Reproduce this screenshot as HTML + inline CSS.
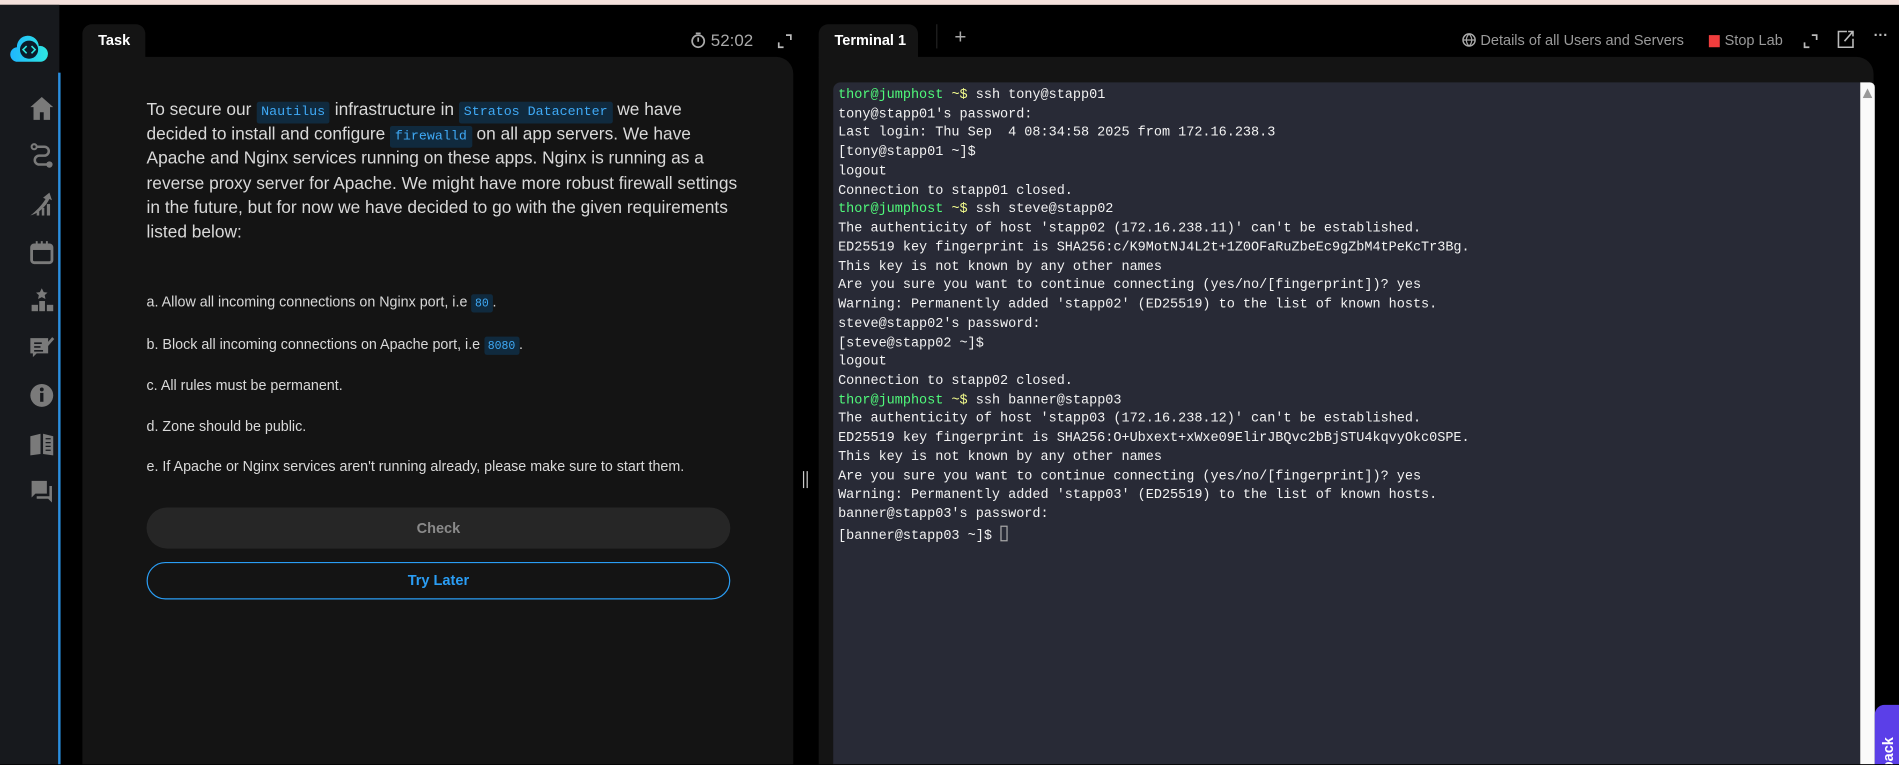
<!DOCTYPE html>
<html><head><meta charset="utf-8"><style>
*{box-sizing:border-box;margin:0;padding:0}
html,body{width:1899px;height:765px;overflow:hidden;background:#000}
#w{position:absolute;left:0;top:0;width:1568px;height:631px;transform:scale(1.2111);transform-origin:0 0;background:#000;font-family:"Liberation Sans",sans-serif;overflow:hidden}
.abs{position:absolute}
.top{left:0;top:0;width:1568px;height:4px;background:#f4e1dc}
.side{left:0;top:4px;width:49px;height:628px;background:#17191d}
.bl{left:48px;top:60px;width:2px;height:572px;background:#2a8fe0}
.ico{position:absolute;left:24px;width:21px;height:21px}
.tab{background:#141414;border-radius:8px 8px 0 0;color:#fff;font-weight:bold;font-size:12px;padding:6px 13px 0;white-space:nowrap}
.panel{background:#141414;border-radius:0 14px 0 0}
.p{color:#d9d9d9;font-size:14.3px;line-height:20.2px;white-space:nowrap}
code{font-family:"Liberation Mono",monospace;font-size:11px;color:#3fa9f5;background:#102a3e;padding:3px 4px;border-radius:2px;line-height:1}
.li{color:#d9d9d9;font-size:11.8px}
.li code{font-size:9.5px;padding:2px 3px}
.term{left:688px;top:68px;width:848px;height:563px;background:#282a36;border-radius:6px 0 0 0;font-family:"Liberation Mono",monospace;font-size:11.15px;line-height:15.74px;color:#f2f2f2;padding:4px 4px;white-space:pre;overflow:hidden}
.g{color:#50fa7b}.y{color:#f1fa8c}
.hd{color:#9a9a9a;font-size:12px;white-space:nowrap}
</style></head><body><div id="w">
<div class="abs top"></div>
<div class="abs side"></div>
<div class="abs bl"></div>
<svg class="abs" style="left:8px;top:29px" width="32" height="24" viewBox="0 0 32 24"><defs><linearGradient id="lg" x1="0" x2="1"><stop offset="0" stop-color="#1fb6ff"/><stop offset="1" stop-color="#2ee6e0"/></linearGradient></defs><path d="M7 22a6 6 0 0 1-1-12a9 9 0 0 1 18-1a6.5 6.5 0 0 1 2 13z" fill="url(#lg)"/><circle cx="16" cy="12" r="7.5" fill="#0b1a2a"/><path d="M14 9l-3 3 3 3M18 9l3 3-3 3" stroke="#2ee6e0" stroke-width="1.3" fill="none"/></svg>
<svg class="ico" style="top:79px" viewBox="0 0 20 20"><path d="M10 1L1 9h2.5v10h5v-6h3v6h5V9H19z" fill="#7a7a7a"/></svg>
<svg class="ico" style="top:118px" viewBox="0 0 20 20"><circle cx="4" cy="3" r="2" fill="none" stroke="#7a7a7a" stroke-width="1.6"/><circle cx="16" cy="17" r="2.5" fill="#7a7a7a"/><path d="M6 3h6a3.5 3.5 0 0 1 0 7H8a3.5 3.5 0 0 0 0 7h6" fill="none" stroke="#7a7a7a" stroke-width="2"/></svg>
<svg class="ico" style="top:158px" viewBox="0 0 20 20"><path d="M1 19c4-3 9-8 12-13l-2-1 5-4 2 6-2-1c-3 6-8 11-15 13z" fill="#7a7a7a"/><rect x="6" y="15" width="2" height="4" fill="#7a7a7a"/><rect x="10" y="13" width="2" height="6" fill="#7a7a7a"/><rect x="14" y="10" width="2.5" height="9" fill="#7a7a7a"/></svg>
<svg class="ico" style="top:198px" viewBox="0 0 20 20"><rect x="2" y="4" width="16" height="14" rx="2" fill="none" stroke="#7a7a7a" stroke-width="2.2"/><rect x="2" y="4" width="16" height="4" fill="#7a7a7a"/><path d="M6 1v3M10 1v3M14 1v3" stroke="#7a7a7a" stroke-width="1.5"/></svg>
<svg class="ico" style="top:237px" viewBox="0 0 20 20"><path d="M10 1l1.5 3 3 .4-2.2 2 .6 3-2.9-1.5-2.9 1.5.6-3-2.2-2 3-.4z" fill="#7a7a7a"/><rect x="2" y="14" width="5" height="5" fill="#7a7a7a"/><rect x="8" y="11" width="4.5" height="8" fill="#7a7a7a"/><rect x="14" y="14" width="5" height="5" fill="#7a7a7a"/></svg>
<svg class="ico" style="top:276px" viewBox="0 0 20 20"><path d="M1 3h14v12H6l-3 3v-3H1z" fill="#7a7a7a"/><path d="M4 7h6M4 10h5M4 13h7" stroke="#17191d" stroke-width="1.3"/><path d="M12 11l7-8" stroke="#7a7a7a" stroke-width="2.2"/></svg>
<svg class="ico" style="top:316px" viewBox="0 0 20 20"><circle cx="10" cy="10" r="9" fill="#7a7a7a"/><rect x="8.7" y="8" width="2.6" height="7" fill="#17191d"/><circle cx="10" cy="5.3" r="1.5" fill="#17191d"/></svg>
<svg class="ico" style="top:356px" viewBox="0 0 20 20"><path d="M1 4l8-2v16l-8 1zM11 2l8 2v15l-8-1z" fill="#7a7a7a"/><path d="M13 6h4M13 9h4M13 12h4M13 15h4" stroke="#17191d" stroke-width="1"/></svg>
<svg class="ico" style="top:395px" viewBox="0 0 20 20"><path d="M2 2h12v10H5l-3 3z" fill="#7a7a7a"/><path d="M16 6h2v13l-3-3H6v-2h10z" fill="#7a7a7a"/></svg>

<div class="abs" style="left:60px;top:6px;width:1508px;height:626px;background:#000;border-radius:16px 0 0 0"></div>
<div class="abs tab" style="left:68px;top:20px;width:52px;height:28px">Task</div>
<div class="abs panel" style="left:68px;top:47px;width:587px;height:585px"></div>
<div class="abs hd" style="left:570px;top:25px;font-size:14px;color:#aaa">
<svg width="13" height="14" viewBox="0 0 13 14" style="vertical-align:-2px"><circle cx="6.5" cy="8" r="5" fill="none" stroke="#aaa" stroke-width="1.4"/><path d="M4.5 1.5h4M6.5 5v3.5" stroke="#aaa" stroke-width="1.4"/></svg> 52:02</div>
<svg class="abs" style="left:642px;top:28px" width="12" height="12" viewBox="0 0 12 12"><path d="M7 1h4v4M5 11H1V7" stroke="#bbb" stroke-width="1.4" fill="none"/></svg>
<div class="abs p" style="left:121px;top:81px">To secure our <code>Nautilus</code> infrastructure in <code>Stratos Datacenter</code> we have<br>decided to install and configure <code>firewalld</code> on all app servers. We have<br>Apache and Nginx services running on these apps. Nginx is running as a<br>reverse proxy server for Apache. We might have more robust firewall settings<br>in the future, but for now we have decided to go with the given requirements<br>listed below:</div>
<div class="abs li" style="left:121px;top:242px">a. Allow all incoming connections on Nginx port, i.e <code>80</code>.</div>
<div class="abs li" style="left:121px;top:277px">b. Block all incoming connections on Apache port, i.e <code>8080</code>.</div>
<div class="abs li" style="left:121px;top:311px">c. All rules must be permanent.</div>
<div class="abs li" style="left:121px;top:345px">d. Zone should be public.</div>
<div class="abs li" style="left:121px;top:378px">e. If Apache or Nginx services aren't running already, please make sure to start them.</div>
<div class="abs" style="left:121px;top:419px;width:482px;height:34px;background:#262626;border-radius:17px;color:#8a8a8a;font-size:12px;font-weight:bold;text-align:center;line-height:34px">Check</div>
<div class="abs" style="left:121px;top:464px;width:482px;height:31px;border:1px solid #2a9df4;border-radius:16px;color:#2a9df4;font-size:12px;font-weight:bold;text-align:center;line-height:29px">Try Later</div>
<div class="abs" style="left:663px;top:389px;width:1px;height:14px;background:#ccc"></div>
<div class="abs" style="left:666px;top:389px;width:1px;height:14px;background:#ccc"></div>

<div class="abs tab" style="left:676px;top:20px;width:82px;height:28px">Terminal 1</div>
<div class="abs" style="left:773px;top:20px;width:1px;height:20px;background:#222"></div>
<div class="abs" style="left:788px;top:21px;color:#aaa;font-size:17px">+</div>
<div class="abs hd" style="left:1207px;top:26px">
<svg width="12" height="12" viewBox="0 0 12 12" style="vertical-align:-2px"><circle cx="6" cy="6" r="5" fill="none" stroke="#aaa" stroke-width="1.2"/><path d="M1 6h10M6 1c-3 3-3 7 0 10M6 1c3 3 3 7 0 10" stroke="#aaa" fill="none"/></svg> Details of all Users and Servers</div>
<div class="abs" style="left:1411px;top:29px;width:9px;height:10px;background:#f03d3d"></div>
<div class="abs hd" style="left:1424px;top:26px">Stop Lab</div>
<svg class="abs" style="left:1489px;top:28px" width="12" height="12" viewBox="0 0 12 12"><path d="M7 1h4v4M5 11H1V7" stroke="#bbb" stroke-width="1.4" fill="none"/></svg>
<svg class="abs" style="left:1517px;top:25px" width="14" height="15" viewBox="0 0 14 15"><path d="M8 1H1v13h12V7M6 9l7-8M9 1h4v4" stroke="#bbb" stroke-width="1.3" fill="none"/></svg>
<div class="abs" style="left:1547px;top:22px;color:#bbb;font-size:12px;font-weight:bold">···</div>
<div class="abs panel" style="left:676px;top:47px;width:871px;height:585px"></div>
<div class="abs term"><span class="g">thor@jumphost</span> <span class="y">~$</span> ssh tony@stapp01
tony@stapp01's password: 
Last login: Thu Sep  4 08:34:58 2025 from 172.16.238.3
[tony@stapp01 ~]$ 
logout
Connection to stapp01 closed.
<span class="g">thor@jumphost</span> <span class="y">~$</span> ssh steve@stapp02
The authenticity of host 'stapp02 (172.16.238.11)' can't be established.
ED25519 key fingerprint is SHA256:c/K9MotNJ4L2t+1Z0OFaRuZbeEc9gZbM4tPeKcTr3Bg.
This key is not known by any other names
Are you sure you want to continue connecting (yes/no/[fingerprint])? yes
Warning: Permanently added 'stapp02' (ED25519) to the list of known hosts.
steve@stapp02's password: 
[steve@stapp02 ~]$ 
logout
Connection to stapp02 closed.
<span class="g">thor@jumphost</span> <span class="y">~$</span> ssh banner@stapp03
The authenticity of host 'stapp03 (172.16.238.12)' can't be established.
ED25519 key fingerprint is SHA256:O+Ubxext+xWxe09ElirJBQvc2bBjSTU4kqvyOkc0SPE.
This key is not known by any other names
Are you sure you want to continue connecting (yes/no/[fingerprint])? yes
Warning: Permanently added 'stapp03' (ED25519) to the list of known hosts.
banner@stapp03's password: 
[banner@stapp03 ~]$ <span style="display:inline-block;width:6px;height:13px;border:1px solid #aaa;vertical-align:-2px"></span></div>
<div class="abs" style="left:1536px;top:68px;width:12px;height:563px;background:#fafafa;border-radius:0 4px 0 0"></div>
<svg class="abs" style="left:1538px;top:73px" width="8" height="8" viewBox="0 0 8 8"><path d="M4 0L8 8H0z" fill="#999"/></svg>
<div class="abs" style="left:1548px;top:582px;width:20px;height:49px;background:#5b3fe8;border-radius:8px 0 0 0;overflow:hidden">
<div style="position:absolute;left:4px;top:12px;writing-mode:vertical-rl;transform:rotate(180deg);color:#fff;font-size:12px;font-weight:bold;white-space:nowrap;height:70px;text-align:left">Feedback</div></div>
</div></body></html>
